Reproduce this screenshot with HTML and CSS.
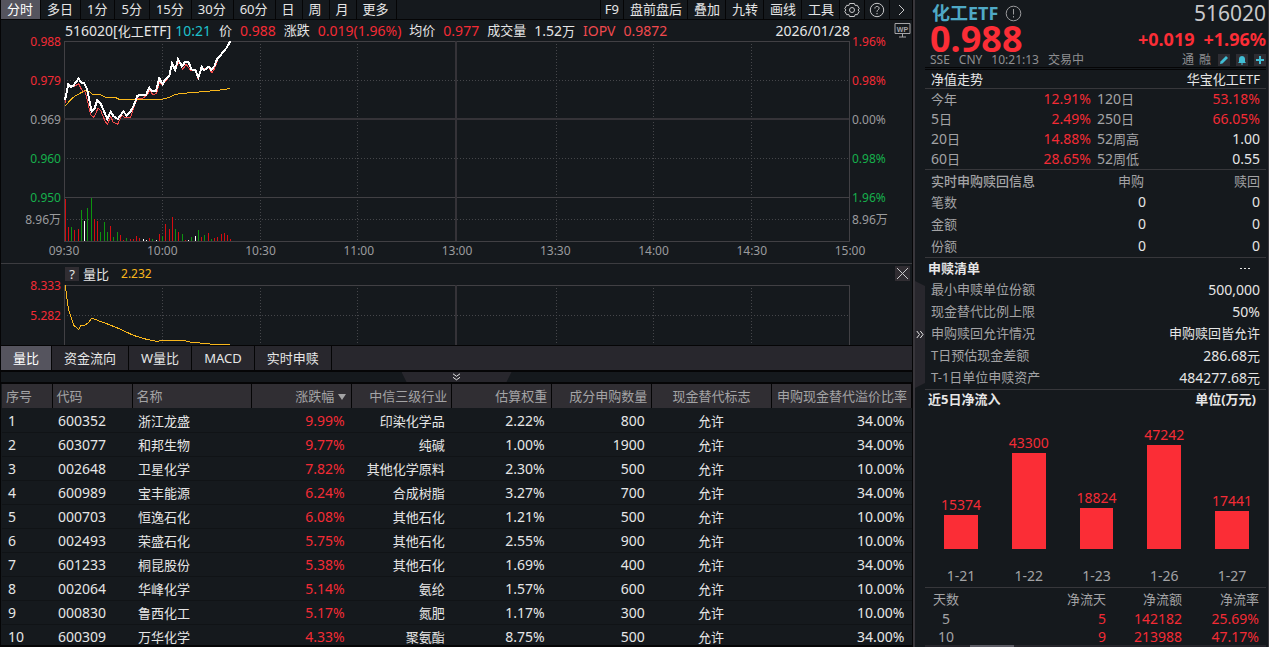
FILE: index.html
```html
<!DOCTYPE html>
<html lang="zh-CN">
<head>
<meta charset="utf-8">
<title>化工ETF 516020</title>
<link rel="stylesheet" href="styles.css">
</head>
<body>
<div class="app">
<main class="main">
  <nav class="toolbar">
    <button class="tool active">分时</button><button class="tool">多日</button><button class="tool">1分</button><button class="tool">5分</button><button class="tool">15分</button><button class="tool">30分</button><button class="tool">60分</button><button class="tool">日</button><button class="tool">周</button><button class="tool">月</button><button class="tool">更多</button>
    <span class="spacer"></span>
    <button class="tool first">F9</button><button class="tool snug">盘前盘后</button><button class="tool snug">叠加</button><button class="tool snug">九转</button><button class="tool snug">画线</button><button class="tool snug">工具</button>
    <button class="tool icon" aria-label="设置"><svg width="16" height="16" viewBox="0 0 16 16"><path d="M5.600 1.500h4.800l.8 2 2.100-.2 1.900 3.300L14 8l1.200 1.400-1.900 3.300-2.100-.2-.8 2H5.600l-.8-2-2.100.2L.8 9.400 2 8 .8 6.600l1.900-3.300 2.100.2z"/><circle cx="8" cy="8" r="2.500"/></svg></button>
    <button class="tool icon" aria-label="帮助"><svg width="16" height="16" viewBox="0 0 16 16"><circle cx="8" cy="8" r="6.700"/><path d="M5.900 6.500C5.900 3.700 10.200 3.800 10.100 6.300 10 7.900 8 7.800 8 9.800M8 11v1.300"/></svg></button>
    <button class="tool icon" aria-label="展开"><svg width="16" height="16" viewBox="0 0 16 16"><path d="M6 3l5 5-5 5"/></svg></button>
  </nav>

  <section class="chart">
    <div class="axis left">
      <span class="up">0.988</span><span class="up">0.979</span><span>0.969</span><span class="down">0.960</span><span class="down">0.950</span><span class="vol">8.96万</span>
    </div>
    <div class="quote">
      <span>516020[<span class="cjk">化工</span>ETF]</span><span class="time">10:21</span><span class="cjk">价</span><span class="up">0.988</span><span class="cjk">涨跌</span><span class="up">0.019(1.96%)</span><span class="cjk">均价</span><span class="up">0.977</span><span class="cjk">成交量</span><span>1.52<span class="cjk">万</span></span><span class="iopv">IOPV</span><span class="iopv">0.9872</span><span class="date">2026/01/28</span>
    </div>
    <svg class="plot price" viewBox="0 0 786 201" preserveAspectRatio="none">
      <path class="dots" d="M98.500 0V200M196.500 0V200M293.500 0V200M492.500 0V200M589.500 0V200M687.500 0V200M0 39.500H785M0 117.500H785M0 178.500H785"/>
      <path class="rule" d="M0 .5H785.500V200.500H.5V0M0 156.500H785"/>
      <path class="rule heavy" d="M0 78H785M392 0V200"/>
      <g transform="translate(-64 89) scale(.33333)">
        <path class="bar red" d="M196 333V207M206 333V291M224 333V300M236 333V297M284 333V267M293 333V273M332 333V288M361 333V315M370 333V330M391 333V327M400 333V327M409 333V318M418 333V323M448 333V324M479 333V312M497 333V282M508 333V297M517 333V261M536 333V306M556 333V330M604 333V321M626 333V309M643 333V324M652 333V321M664 333V312M674 333V309M682 333V315M691 333V327"/>
        <path class="bar green" d="M214 333V291M244 333V240M262 333V234M275 333V204M301 333V306M313 333V276M322 333V306M340 333V321M352 333V306M379 333V324M457 333V327M487 333V318M526 333V297M547 333V312M574 333V321M595 333V300M613 333V315M634 333V327"/>
        <path class="bar white" d="M253 333V273M430 333V327M439 333V330M469 333V330M565 333V330M586 333V318"/>
      </g>
      <g transform="translate(-14 -6) scale(.33333)">
        <polyline class="line avg" points="45,214 60,196 75,183 90,175 105,167 118,170 126,177 150,179 168,187 195,187 208,193 335,193 358,187 375,178 420,173 460,170 490,167 520,164 540,160"/>
        <polyline class="line nav" points="45,205 55,155 70,156 86,146 95,165 106,172 112,195 122,240 132,247 144,220 152,226 165,258 172,268 182,245 190,262 203,268 215,240 225,248 242,247 252,215 262,190 275,192 290,182 300,166 308,178 320,176 328,142 338,150 358,124 366,92 376,108 386,80 398,104 408,88 424,108 436,108 445,133 455,102 476,98 486,114 494,100 504,72 541,20"/>
        <polyline class="line last" points="45,195 55,148 62,156 70,152 86,130 92,142 102,144 112,165 125,230 133,222 142,195 152,206 172,252 182,230 190,243 203,252 220,230 230,241 240,232 250,215 262,183 270,180 288,180 298,158 306,169 318,169 328,130 338,148 344,136 358,122 366,86 376,105 384,72 396,94 406,80 416,82 424,103 436,105 445,128 455,96 462,106 476,95 484,105 494,92 502,70 512,60 530,38 541,18"/>
      </g>
    </svg>
    <div class="side">
      <div class="axis right">
        <span class="up">1.96%</span><span class="up">0.98%</span><span>0.00%</span><span class="down">0.98%</span><span class="down">1.96%</span><span class="vol">8.96万</span>
      </div>
      <button class="wp" aria-label="WP"><svg width="17" height="17" viewBox="0 0 17 17"><path d="M1 1.500h15v10H1zM8.500 12v3M5 15h7"/><text x="8.500" y="9.500" text-anchor="middle">WP</text></svg></button>
    </div>
    <div class="times"><span>09:30</span><span>10:00</span><span>10:30</span><span>11:00</span><span>13:00</span><span>13:30</span><span>14:00</span><span>14:30</span><span>15:00</span></div>
  </section>

  <section class="indicator">
    <div class="axis left"><span class="up">8.333</span><span class="up">5.282</span></div>
    <div class="ind-head"><button class="ask">?</button><span>量比</span><span class="value">2.232</span></div>
    <button class="close" aria-label="关闭"><svg width="15" height="15" viewBox="0 0 15 15"><path d="M2 2l11 11M13 2L2 13"/></svg></button>
    <svg class="plot ratio" viewBox="0 0 786 60" preserveAspectRatio="none">
      <path class="dots" d="M98.500 0V60M196.500 0V60M293.500 0V60M492.500 0V60M589.500 0V60M687.500 0V60M0 30.500H785"/>
      <path class="rule" d="M.5 60V.5H785.500V60"/>
      <path class="rule heavy" d="M392 0V60"/>
      <g transform="translate(-64 -25) scale(.33333)"><polyline class="line avg" points="196,76 200,110 206,150 213,172 221,196 236,208 243,196 255,195 266,187 275,175 290,180 325,193 360,207 400,226 440,238 470,244 490,241 550,241 575,247 600,249 640,253 690,253"/></g>
    </svg>
  </section>

  <nav class="tabs"><button class="tab active">量比</button><button class="tab">资金流向</button><button class="tab">W量比</button><button class="tab">MACD</button><button class="tab">实时申赎</button></nav>
  <div class="fold"><button class="fold-btn" aria-label="收起"><svg width="9" height="8" viewBox="0 0 9 8"><path d="M1 .8l3.500 2.500L8 .8M1 4.300l3.500 2.500L8 4.300"/></svg></button></div>

  <div class="holdings">
    <table>
      <colgroup><col class="c50"><col class="c80"><col class="c120"><col class="c100"><col class="c100"><col class="c100"><col class="c100"><col class="c120"><col class="c140"></colgroup>
      <thead><tr><th>序号</th><th>代码</th><th>名称</th><th class="r">涨跌幅<svg class="sort" width="8" height="6" viewBox="0 0 8 6"><path d="M0 0h8L4 6z"/></svg></th><th class="r">中信三级行业</th><th class="r">估算权重</th><th class="r">成分申购数量</th><th class="c">现金替代标志</th><th class="r">申购现金替代溢价比率</th></tr></thead>
      <tbody>
        <tr><td>1</td><td>600352</td><td class="t">浙江龙盛</td><td class="r up">9.99%</td><td class="r t">印染化学品</td><td class="r">2.22%</td><td class="r">800</td><td class="c t">允许</td><td class="r">34.00%</td></tr>
        <tr><td>2</td><td>603077</td><td class="t">和邦生物</td><td class="r up">9.77%</td><td class="r t">纯碱</td><td class="r">1.00%</td><td class="r">1900</td><td class="c t">允许</td><td class="r">34.00%</td></tr>
        <tr><td>3</td><td>002648</td><td class="t">卫星化学</td><td class="r up">7.82%</td><td class="r t">其他化学原料</td><td class="r">2.30%</td><td class="r">500</td><td class="c t">允许</td><td class="r">10.00%</td></tr>
        <tr><td>4</td><td>600989</td><td class="t">宝丰能源</td><td class="r up">6.24%</td><td class="r t">合成树脂</td><td class="r">3.27%</td><td class="r">700</td><td class="c t">允许</td><td class="r">34.00%</td></tr>
        <tr><td>5</td><td>000703</td><td class="t">恒逸石化</td><td class="r up">6.08%</td><td class="r t">其他石化</td><td class="r">1.21%</td><td class="r">500</td><td class="c t">允许</td><td class="r">10.00%</td></tr>
        <tr><td>6</td><td>002493</td><td class="t">荣盛石化</td><td class="r up">5.75%</td><td class="r t">其他石化</td><td class="r">2.55%</td><td class="r">900</td><td class="c t">允许</td><td class="r">10.00%</td></tr>
        <tr><td>7</td><td>601233</td><td class="t">桐昆股份</td><td class="r up">5.38%</td><td class="r t">其他石化</td><td class="r">1.69%</td><td class="r">400</td><td class="c t">允许</td><td class="r">34.00%</td></tr>
        <tr><td>8</td><td>002064</td><td class="t">华峰化学</td><td class="r up">5.14%</td><td class="r t">氨纶</td><td class="r">1.57%</td><td class="r">600</td><td class="c t">允许</td><td class="r">10.00%</td></tr>
        <tr><td>9</td><td>000830</td><td class="t">鲁西化工</td><td class="r up">5.17%</td><td class="r t">氮肥</td><td class="r">1.17%</td><td class="r">300</td><td class="c t">允许</td><td class="r">10.00%</td></tr>
        <tr><td>10</td><td>600309</td><td class="t">万华化学</td><td class="r up">4.33%</td><td class="r t">聚氨酯</td><td class="r">8.75%</td><td class="r">500</td><td class="c t">允许</td><td class="r">34.00%</td></tr>
      </tbody>
    </table>
  </div>
</main>

<div class="gutter"><button class="drawer" aria-label="收起侧栏"><svg width="8" height="9" viewBox="0 0 8 9"><path d="M.8 1l2.700 3.500L.8 8M4.300 1L7 4.500 4.300 8"/></svg></button></div>

<aside class="panel">
  <header class="head">
    <div class="name-row"><h1>化工ETF</h1><svg class="info" width="17" height="17" viewBox="0 0 17 17"><circle cx="8.500" cy="8.500" r="7.300"/><path d="M8.500 4v5.500M8.500 11v1.500"/></svg><span class="code">516020</span></div>
    <div class="price-row"><strong class="big">0.988</strong><strong class="chg">+0.019</strong><strong class="chg">+1.96%</strong></div>
    <div class="status-row">
      <span>SSE</span><span>CNY</span><span>10:21:13</span><span>交易中</span><span class="spacer"></span>
      <span class="tag">通</span><span class="tag">融</span>
      <button class="mini" aria-label="编辑"><svg width="12" height="12" viewBox="0 0 12 12"><path d="M2 10l.5-2.500L8 2l2 2-5.500 5.500z"/></svg></button>
      <button class="mini" aria-label="提醒"><svg width="12" height="12" viewBox="0 0 12 12"><path d="M2 9l1-1.300V5c0-4 6-4 6 0v2.700L10 9zM5 9.500h2v1H5z"/></svg></button>
      <button class="mini" aria-label="添加"><svg width="12" height="12" viewBox="0 0 12 12"><path d="M5 2h2v3h3v2H7v3H5V7H2V5h3z"/></svg></button>
    </div>
  </header>

  <h2 class="title nav-title"><span>净值走势</span><span>华宝化工ETF</span></h2>
  <dl class="perf">
    <dt>今年</dt><dd class="up">12.91%</dd><dt>120<span class="cjk">日</span></dt><dd class="up">53.18%</dd>
    <dt>5<span class="cjk">日</span></dt><dd class="up">2.49%</dd><dt>250<span class="cjk">日</span></dt><dd class="up">66.05%</dd>
    <dt>20<span class="cjk">日</span></dt><dd class="up">14.88%</dd><dt>52<span class="cjk">周高</span></dt><dd>1.00</dd>
    <dt>60<span class="cjk">日</span></dt><dd class="up">28.65%</dd><dt>52<span class="cjk">周低</span></dt><dd>0.55</dd>
  </dl>

  <table class="live">
    <thead><tr><th>实时申购赎回信息</th><th>申购</th><th>赎回</th></tr></thead>
    <tbody><tr><th>笔数</th><td>0</td><td>0</td></tr><tr><th>金额</th><td>0</td><td>0</td></tr><tr><th>份额</th><td>0</td><td>0</td></tr></tbody>
  </table>

  <section class="list">
    <h2 class="title bold"><span>申赎清单</span><button class="more" aria-label="更多"><i></i><i></i><i></i></button></h2>
    <dl>
      <div><dt>最小申赎单位份额</dt><dd>500,000</dd></div>
      <div><dt>现金替代比例上限</dt><dd>50%</dd></div>
      <div><dt>申购赎回允许情况</dt><dd class="cjk">申购赎回皆允许</dd></div>
      <div><dt>T日预估现金差额</dt><dd>286.68<span class="cjk">元</span></dd></div>
      <div><dt>T-1日单位申赎资产</dt><dd>484277.68<span class="cjk">元</span></dd></div>
    </dl>
  </section>

  <section class="flow">
    <h2 class="title bold"><span>近5日净流入</span><span class="unit">单位(万元)</span></h2>
    <div class="bars">
      <div><span>15374</span><b style="height:34px"></b></div>
      <div><span>43300</span><b style="height:96px"></b></div>
      <div><span>18824</span><b style="height:41px"></b></div>
      <div><span>47242</span><b style="height:104px"></b></div>
      <div><span>17441</span><b style="height:38px"></b></div>
    </div>
    <div class="days"><span>1-21</span><span>1-22</span><span>1-23</span><span>1-26</span><span>1-27</span></div>
  </section>

  <div class="net">
    <table>
      <thead><tr><th>天数</th><th>净流天</th><th>净流额</th><th>净流率</th></tr></thead>
      <tbody><tr><th>5</th><td>5</td><td>142182</td><td>25.69%</td></tr><tr><th>10</th><td>9</td><td>213988</td><td>47.17%</td></tr></tbody>
    </table>
  </div>
  <div class="scroll"><i></i></div>
</aside>
</div>
</body>
</html>
```
FILE: styles.css
```css
:root {
  --bg: #15191d;
  --raised: #28272d;
  --line: #37373b;
  --text: #e6e6e6;
  --muted: #a3a3a5;
  --red: #f32b35;
  --green: #16b04c;
  --yellow: #f9b71c;
}
* { box-sizing: border-box; }
body {
  margin: 0;
  background: var(--bg);
  color: var(--text);
  font: 14px/20px "Noto Sans", "Noto Sans CJK SC", sans-serif;
}
button { margin: 0; padding: 0; border: 0; background: none; color: inherit; font: inherit; }
svg { display: block; fill: none; stroke: currentColor; }
h1, h2, dl, dd { margin: 0; font-weight: 400; }
table { border-collapse: collapse; table-layout: fixed; width: 100%; }
th { font-weight: 400; text-align: left; }
th, td { padding: 0; white-space: nowrap; }
.cjk { font-size: 13px; }
.up { color: var(--red); }
.down { color: var(--green); }
.spacer { flex: 1; }

.app { display: grid; grid-template-columns: minmax(0, 1fr) 12px 344px; height: 100vh; min-height: 480px; overflow: hidden; }
.main { display: flex; flex-direction: column; min-height: 0; border-left: 1px solid #050506; border-right: 1px solid #050506; }

.toolbar { display: flex; height: 20px; border-bottom: 1px solid #050506; font-size: 13px; line-height: 19px; }
.tool { padding: 0 6px; border-right: 1px solid #050506; white-space: nowrap; }
.tool:not(.snug, .icon) { padding-right: 7px; }
.tool.active, .tab.active { background: #55545e; color: #fff; }
.tool.first { border-left: 1px solid #050506; padding: 0 4px; }
.tool.snug { padding-right: 5px; }
.tool.icon { padding: 0 4px; color: #c8c8ca; }
.tool.icon:last-child { border-right: 0; padding: 0 3px; }

.chart { display: grid; grid-template-columns: 63px minmax(0, 1fr) 62px; grid-template-rows: 21px 201px 21px; border-bottom: 1px solid #3c3c40; }
.axis { display: flex; flex-direction: column; gap: 25px; font-size: 12px; line-height: 14px; color: #9b9b9d; }
.axis .vol { margin-top: -17px; }
.axis.left { grid-row: 1 / 3; text-align: right; padding: 15px 3px 0 0; }
.quote { display: flex; gap: 8px; padding-left: 1px; white-space: nowrap; overflow: hidden; line-height: 21px; }
.quote .time { color: #1fc0cc; margin-left: -4px; }
.iopv { color: #f0494e; }
.date { margin-left: auto; }
.plot { width: 100%; shape-rendering: crispEdges; }
.plot * { vector-effect: non-scaling-stroke; }
.plot.price { grid-column: 2; height: 201px; }
.plot.ratio { grid-column: 2; height: 60px; }
.rule { stroke: #414044; }
.rule.heavy { stroke: #353338; stroke-width: 2; }
.dots { stroke: #45464a; stroke-dasharray: 1 2; }
.bar.red { stroke: #d40d10; }
.bar.green { stroke: #0d940f; }
.bar.white { stroke: #fff; }
.line.avg { stroke: var(--yellow); }
.line.nav { stroke: #f04b4b; }
.line.last { stroke: #fff; stroke-width: 2; }
.side { grid-column: 3; grid-row: 1 / 3; display: flex; justify-content: space-between; align-items: flex-start; }
.axis.right { padding: 15px 0 0 2px; }
.wp { padding: 2px 1px 0 0; color: #a5a5a8; }
.wp text { fill: currentColor; stroke: none; font: 700 7px "Liberation Sans", Arial, sans-serif; }
.times { grid-column: 2; display: flex; justify-content: space-between; margin: 0 -16px; font-size: 12px; line-height: 17px; color: #9b9b9d; }
.times span { width: 32px; text-align: center; }

.indicator { display: grid; grid-template-columns: 63px minmax(0, 1fr) 62px; grid-template-rows: 21px 60px; }
.indicator .axis { padding-top: 15px; gap: 16px; }
.ind-head { display: flex; align-items: center; gap: 4px; height: 20px; font-size: 13px; }
.ask { width: 14px; line-height: 14px; margin-left: 1px; background: #302d32; }
.ind-head .value { color: var(--yellow); margin-left: 8px; font-size: 12px; }
.close { justify-self: end; align-self: start; margin: 2px 2px 0 0; background: #302d32; color: #c8c8ca; }

.tabs { display: flex; height: 27px; border: solid #050506; border-width: 1px 0 2px; background: var(--raised); font-size: 13px; line-height: 24px; }
.tab { padding: 0 12px; border-right: 1px solid #050506; }
.fold { display: flex; justify-content: center; height: 12px; border-bottom: 2px solid #050506; }
.fold-btn { display: grid; place-items: center; width: 110px; background: var(--raised); clip-path: polygon(0 0, 100% 0, 105px 100%, 5px 100%); }

.holdings { flex: 1; min-height: 0; overflow: hidden; padding-left: 1px; border-bottom: 2px solid #050506; }
.holdings thead th { height: 24px; padding: 0 4px 1px; background: #302e33; border-right: 1px solid #050506; color: var(--muted); font-size: 13px; }
.holdings th.r, .holdings td.r { text-align: right; }
.holdings th.c, .holdings td.c { text-align: center; }
.holdings td { height: 24px; padding: 2px 7px 0 6px; border-bottom: 1px solid #101316; line-height: 20px; }
.holdings td.t { font-size: 13px; }
.sort { display: inline-block; margin: 0 1px 1px 4px; fill: currentColor; stroke: none; }
.c50 { width: 5.5%; } .c80 { width: 8.8%; } .c100 { width: 11%; } .c120 { width: 13.15%; } .c140 { width: 15.4%; }

.gutter { display: flex; align-items: flex-start; border-left: 2px solid #38363b; padding-top: 281px; }
.drawer { display: grid; place-items: center; width: 100%; height: 107px; background: var(--raised); clip-path: polygon(0 0, 100% 5px, 100% 102px, 0 100%); }

.panel { display: flex; flex-direction: column; min-height: 0; padding-right: 2px; border-right: 1px solid #38363b; }
.head { border-bottom: 3px double #050506; padding-left: 5px; }
.name-row { display: flex; align-items: center; height: 26px; padding-left: 2px; }
.name-row h1 { color: #4fa9c6; font-size: 18px; font-weight: 700; line-height: 26px; }
.info { margin-left: 7px; color: #9b9b9d; }
.code { margin-left: auto; font-size: 21px; line-height: 26px; color: #c9c9cb; }
.price-row { display: flex; align-items: center; gap: 9px; height: 26px; color: #fb2d36; }
.big { font-size: 36px; line-height: 26px; margin-right: auto; }
.chg { font-size: 18px; line-height: 26px; }
.status-row { display: flex; align-items: center; gap: 9px; height: 15px; font-size: 12px; line-height: 15px; color: #8f8f91; }
.tag { margin-right: -4px; }
.mini { width: 12px; height: 12px; margin-left: -3px; background: #2e2d33; color: #41bed5; }
.tag + .mini { margin-left: 2px; }
.mini svg { fill: currentColor; stroke: none; }

.title { display: flex; justify-content: space-between; font-size: 13px; line-height: 19px; padding: 0 6px 0 3px; }
.title.bold { font-weight: 700; }
.nav-title { border-bottom: 1px solid var(--line); padding-left: 6px; line-height: 18px; }
.perf { display: grid; grid-template-columns: 60px 100px 1fr 1fr; padding: 0 6px; border-bottom: 1px solid var(--line); }
.perf dt, .list dt { color: var(--muted); }
.perf dt:first-child { font-size: 13px; }
.perf dt, .perf dd { height: 20px; white-space: nowrap; }
.perf dt:nth-of-type(even) { padding-left: 6px; }
.perf dd { text-align: right; }

.live th { padding-left: 6px; color: var(--muted); font-size: 13px; }
.live { border-bottom: 1px solid var(--line); }
.live tr { height: 22px; }
.live thead tr { height: 21px; }
.live th:first-child { width: 36%; }
.live thead th:first-child { font-weight: 500; }
.live td, .live thead th:not(:first-child) { text-align: right; padding-right: 6px; }
.live th:nth-child(2), .live td:nth-child(2) { width: 30%; padding-right: 4px; }
.list { border-bottom: 1px solid var(--line); }
.list .title { line-height: 21px; }
.more { display: flex; align-items: center; gap: 2px; padding-right: 10px; }
.more i { width: 2px; height: 1px; background: var(--text); }
.list dl { padding: 0 6px; }
.list dl div { display: flex; justify-content: space-between; height: 22px; line-height: 21px; }
.list dt { font-size: 13px; }

.flow { border-bottom: 1px solid var(--line); }
.flow .unit { padding-right: 4px; }
.bars, .days { display: grid; grid-template-columns: repeat(5, 1fr); padding-left: 2px; text-align: center; }
.bars { height: 140px; align-items: end; color: var(--red); }
.bars b { display: block; width: 50%; margin: 0 auto; background: #fb2d36; }
.days { padding-top: 16px; line-height: 22px; color: var(--muted); }

.net { flex: 1; min-height: 0; overflow: hidden; }
.net tr { height: 18px; }
.net thead tr { height: 22px; }
.net th { color: var(--muted); line-height: 18px; }
.net td { color: var(--red); text-align: right; padding-right: 7px; line-height: 18px; }
.net thead th { font-size: 13px; text-align: right; padding-right: 7px; }
.net thead th:first-child { text-align: left; padding-left: 8px; }
.net tbody th { text-align: center; }
.net th:first-child { width: 42px; }
.net th:nth-child(3) { width: 76px; }
.net th:nth-child(4) { width: 77px; }
.scroll { height: 2px; background: #26252b; }
.scroll i { display: block; width: 44px; height: 2px; margin-left: 45px; background: #5b5a63; }
```
